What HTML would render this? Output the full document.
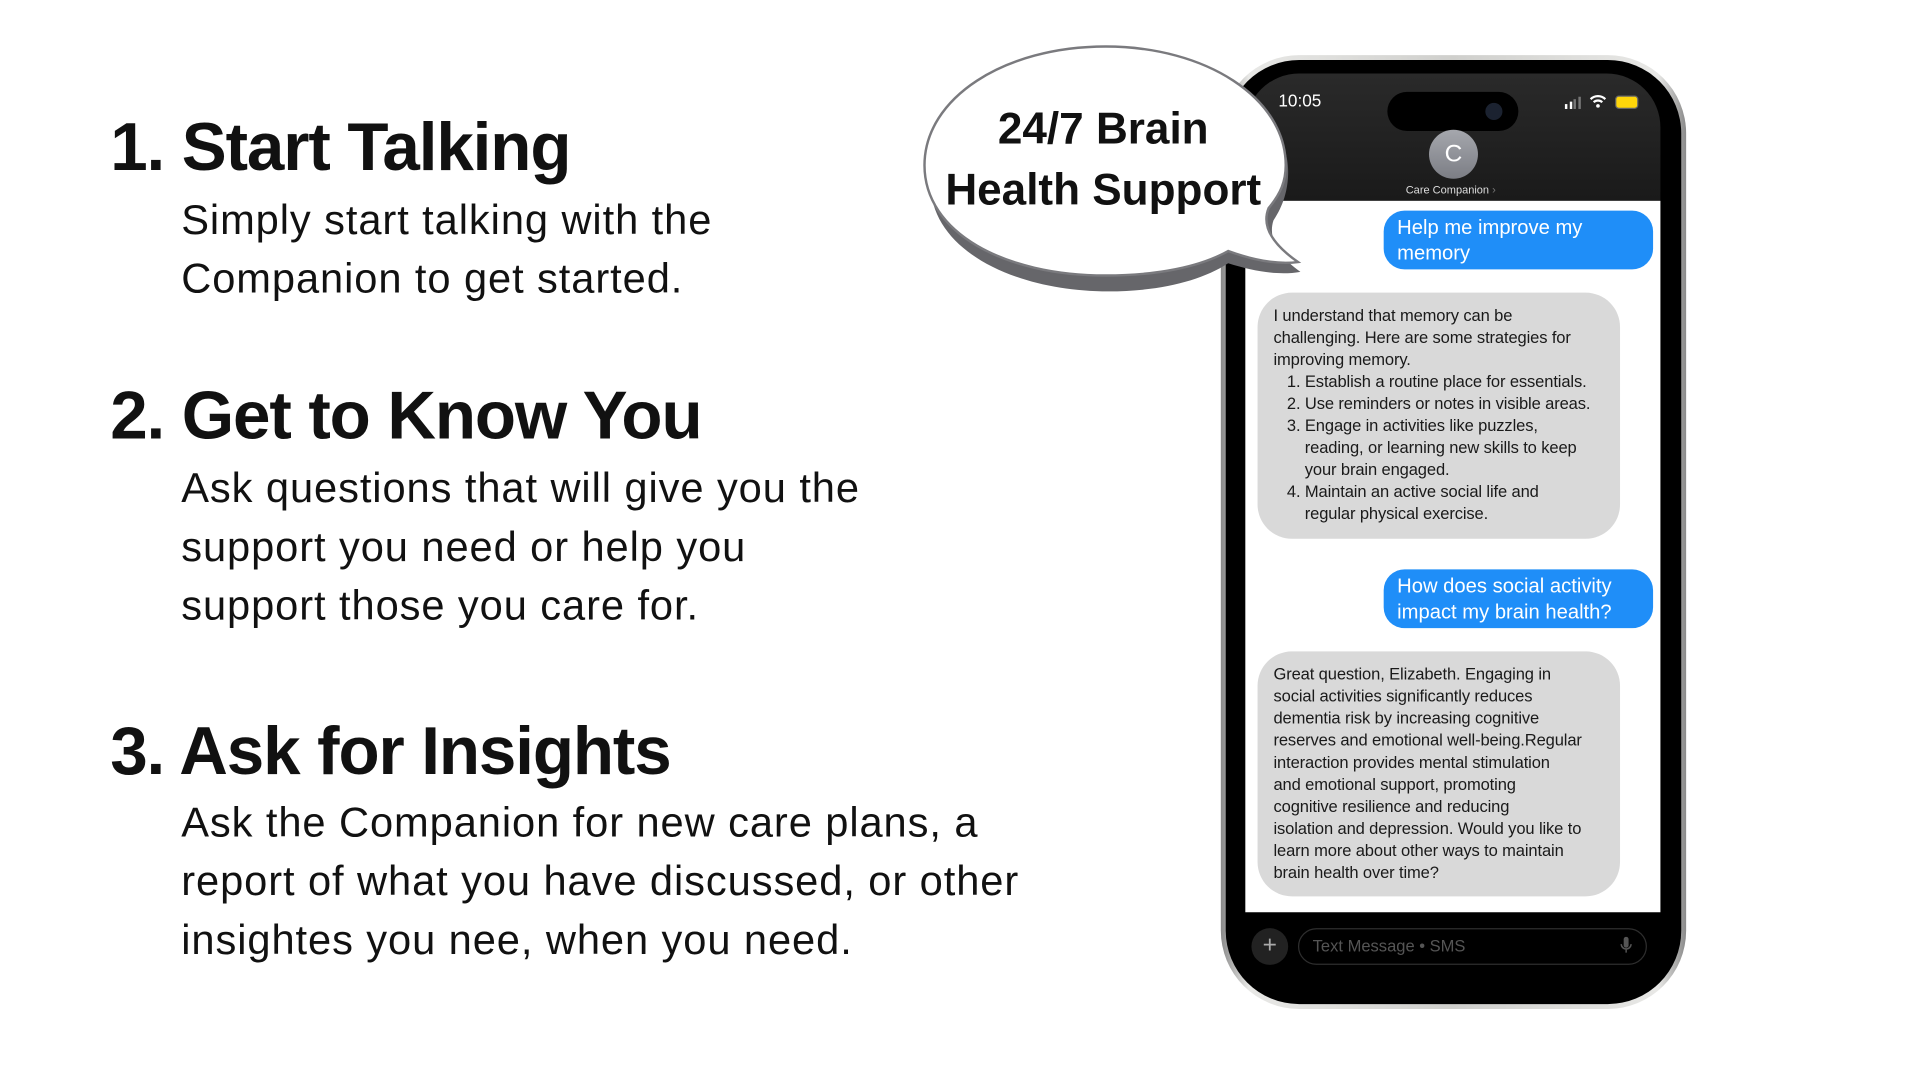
<!DOCTYPE html>
<html><head><meta charset="utf-8"><style>
html,body{margin:0;padding:0;background:#fff;overflow:hidden}
#w{position:absolute;left:0;top:0;width:1568px;height:882px;transform:scale(1.2245);transform-origin:0 0;font-family:"Liberation Sans",sans-serif;color:#111}
.h{position:absolute;left:90px;font-weight:bold;font-size:55px;letter-spacing:-0.9px;white-space:nowrap;line-height:60px}
.p{position:absolute;left:148px;font-size:34px;line-height:48px;white-space:nowrap;letter-spacing:0.75px}
.ab{position:absolute}
.blue{position:absolute;left:1130px;width:220px;background:#1f8ef8;border-radius:17px;color:#fff;font-size:16.5px;line-height:21px;padding:4px 0 0 11px;box-sizing:border-box;white-space:nowrap}
.gray{position:absolute;left:1027px;width:296px;background:#d9d9d9;border-radius:28px;font-size:13.5px;line-height:18px;padding:10px 6px 0 13px;box-sizing:border-box;color:#1a1a1a;white-space:nowrap;letter-spacing:-0.1px}
</style></head><body><div id="w">
<div class="h" style="top:90px">1. Start Talking</div>
<div class="p" style="top:156px">Simply start talking with the<br>Companion to get started.</div>
<div class="h" style="top:309px">2. Get to Know You</div>
<div class="p" style="top:375px">Ask questions that will give you the<br>support you need or help you<br>support those you care for.</div>
<div class="h" style="top:583px">3. Ask for Insights</div>
<div class="p" style="top:648px">Ask the Companion for new care plans, a<br>report of what you have discussed, or other<br>insightes you nee, when you need.</div>

<!-- phone -->
<div class="ab" style="left:997px;top:45px;width:380px;height:779px;border-radius:64px;background:linear-gradient(90deg,#8a8a8a,#e8e8e6 6%,#cfcfcc 50%,#e8e8e6 94%,#8a8a8a)"></div>
<div class="ab" style="left:1001px;top:49px;width:372px;height:771px;border-radius:60px;background:#000"></div>
<div class="ab" style="left:1017px;top:60px;width:339px;height:104px;border-radius:44px 44px 0 0;background:linear-gradient(180deg,#2a2a2a,#1a1a1a)"></div>
<div class="ab" style="left:1017px;top:164px;width:339px;height:581px;background:#fff"></div>
<div class="ab" style="left:1044px;top:74px;color:#fff;font-size:14px">10:05</div>
<div class="ab" style="left:1133px;top:75px;width:107px;height:32px;border-radius:16px;background:#000"></div>
<div class="ab" style="left:1213px;top:84px;width:14px;height:14px;border-radius:7px;background:#1b2230"></div>
<div class="ab" style="left:1278px;top:80px;width:14px;height:9px">
<div class="ab" style="left:0;top:5px;width:2px;height:4px;background:#fff"></div><div class="ab" style="left:3.5px;top:3px;width:2px;height:6px;background:#fff"></div><div class="ab" style="left:7px;top:1px;width:2px;height:8px;background:#777"></div><div class="ab" style="left:10.5px;top:-1px;width:2px;height:10px;background:#777"></div></div>
<svg class="ab" style="left:1298px;top:77px" width="14" height="11" viewBox="0 0 14 11"><path d="M1 4 A8.5 8.5 0 0 1 13 4" stroke="#fff" stroke-width="1.8" fill="none"/><path d="M3.5 6.5 A5 5 0 0 1 10.5 6.5" stroke="#fff" stroke-width="1.8" fill="none"/><circle cx="7" cy="9.5" r="1.5" fill="#fff"/></svg>
<div class="ab" style="left:1319px;top:78px;width:17px;height:9px;border-radius:3px;background:#ffd60a;border:1px solid #666"></div>
<div class="ab" style="left:1167px;top:106px;width:40px;height:40px;border-radius:20px;background:linear-gradient(#a5a7ad,#7c7e85);color:#fff;font-size:20px;text-align:center;line-height:40px">C</div>
<div class="ab" style="left:1148px;top:150px;color:#ddd;font-size:9px">Care Companion <span style="color:#777">›</span></div>

<div class="blue" style="top:172px;height:48px">Help me improve my<br>memory</div>
<div class="gray" style="top:239px;height:201px">I understand that memory can be<br>challenging. Here are some strategies for<br>improving memory.<br>&nbsp;&nbsp;&nbsp;1. Establish a routine place for essentials.<br>&nbsp;&nbsp;&nbsp;2. Use reminders or notes in visible areas.<br>&nbsp;&nbsp;&nbsp;3. Engage in activities like puzzles,<br>&nbsp;&nbsp;&nbsp;&nbsp;&nbsp;&nbsp;&nbsp;reading, or learning new skills to keep<br>&nbsp;&nbsp;&nbsp;&nbsp;&nbsp;&nbsp;&nbsp;your brain engaged.<br>&nbsp;&nbsp;&nbsp;4. Maintain an active social life and<br>&nbsp;&nbsp;&nbsp;&nbsp;&nbsp;&nbsp;&nbsp;regular physical exercise.</div>
<div class="blue" style="top:465px;height:48px">How does social activity<br>impact my brain health?</div>
<div class="gray" style="top:532px;height:200px">Great question, Elizabeth. Engaging in<br>social activities significantly reduces<br>dementia risk by increasing cognitive<br>reserves and emotional well-being.Regular<br>interaction provides mental stimulation<br>and emotional support, promoting<br>cognitive resilience and reducing<br>isolation and depression. Would you like to<br>learn more about other ways to maintain<br>brain health over time?</div>

<div class="ab" style="left:1022px;top:758px;width:30px;height:30px;border-radius:15px;background:#222;color:#aaa;text-align:center;line-height:29px;font-size:20px">+</div>
<div class="ab" style="left:1060px;top:758px;width:285px;height:30px;border-radius:15px;border:1px solid #2e2e2e;box-sizing:border-box;color:#555;font-size:13.5px;line-height:28px;padding-left:11px">Text Message • SMS</div>
<svg class="ab" style="left:1323px;top:765px" width="10" height="16" viewBox="0 0 10 16"><rect x="3" y="0" width="4" height="9" rx="2" fill="#555"/><path d="M1 6 A4 4 0 0 0 9 6 M5 10 V13" stroke="#555" stroke-width="1.2" fill="none"/></svg>

<!-- speech bubble -->
<svg class="ab" style="left:740px;top:30px" width="340" height="220" viewBox="740 30 340 220">
<path d="M903 48 C820 48 760 90 760 150 C760 205 830 238 905 238 C945 238 980 230 1003 215 C1025 222 1045 225 1062 222 C1045 210 1035 195 1040 180 C1048 168 1052 155 1052 140 C1052 90 985 48 903 48 Z" fill="#66666a"/>
<path d="M903 38 C820 38 755 80 755 135 C755 190 820 225 903 225 C945 225 980 218 1003 205 C1025 213 1045 216 1060 214 C1040 200 1030 185 1036 170 C1046 158 1050 148 1050 135 C1050 80 985 38 903 38 Z" fill="#fff" stroke="#7a7a7e" stroke-width="2"/>
<text x="901" y="117" text-anchor="middle" font-family="Liberation Sans,sans-serif" font-weight="bold" font-size="36" fill="#111">24/7 Brain</text>
<text x="901" y="167" text-anchor="middle" font-family="Liberation Sans,sans-serif" font-weight="bold" font-size="36" fill="#111">Health Support</text>
</svg>
</div></body></html>
